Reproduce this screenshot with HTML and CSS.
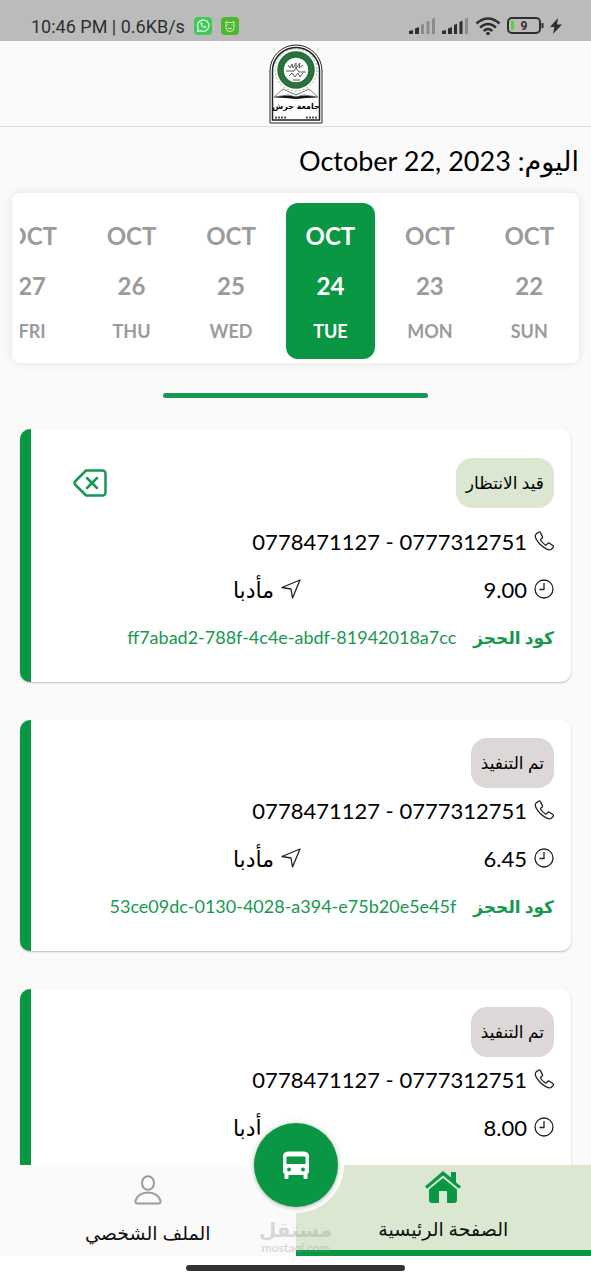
FILE: index.html
```
<!DOCTYPE html>
<html lang="ar" dir="rtl">
<head>
  <meta charset="UTF-8">
  <meta name="viewport" content="width=device-width, initial-scale=1">
  <title>الصفحة الرئيسية</title>
  <link rel="stylesheet" href="styles.css">
</head>
<body>
  <!-- icons used by every card -->
  <svg width="0" height="0" class="sprite">
    <symbol id="icon-phone" viewBox="0 0 20 20">
      <path d="M4.600 1.200 2.200 2.900C.6 4.400 1.600 8.300 5.800 13c4.300 4.500 9.200 6.700 11.300 5.500l2-2c.6-.7.400-1.500-.300-2l-3.300-2.200c-.700-.400-1.400-.300-1.900.300l-.900 1.100c-.400.500-.900.500-1.400.200-1.900-1.200-3.400-2.800-4.500-4.400-.400-.600-.300-1 .200-1.400l1-.8c.700-.500.700-1.200.300-1.900L6.400 1.600C5.900.900 5.200.800 4.600 1.200z"/>
    </symbol>
    <symbol id="icon-clock" viewBox="0 0 20 20">
      <circle cx="10" cy="10" r="9"/>
      <path d="M10 4v6.500H5.500"/>
    </symbol>
    <symbol id="icon-send" viewBox="0 0 20 20">
      <path d="M1 8.500 19 1l-7.500 18-1.500-9z"/>
    </symbol>
  </svg>

  <div class="status-bar" dir="ltr">
    <div class="status-left">
      <span>10:46 PM | 0.6KB/s</span>
      <svg class="app-icon" width="18" height="18" viewBox="0 0 18 18">
        <rect width="18" height="18" rx="4" fill="#3fc95c"/>
        <path d="M3.500 14.500l.8-2.900a5.700 5.700 0 1 1 2.200 2.100z" fill="none" stroke="#e6ffe9" stroke-width="1.200"/>
        <path d="M6.600 5.800c-1 1.600 2.600 5.800 5 5.200l.7-1.200-1.600-.9-.8.7c-.9-.4-1.500-1.100-1.900-1.900l.6-.7-.7-1.500z" fill="#e6ffe9"/>
      </svg>
      <svg class="app-icon" width="18" height="18" viewBox="0 0 18 18">
        <rect width="18" height="18" rx="4" fill="#4db835"/>
        <path d="M5 4.500l2 1h4l2-1v6a4 4 0 0 1-8 0z" fill="none" stroke="#d4f5b8"/>
        <path d="M7 7.500v1M11 7.500v1M7 11q2 1.500 4 0" fill="none" stroke="#d4f5b8"/>
      </svg>
    </div>
    <div class="status-right">
      <svg width="27" height="18" viewBox="0 0 27 18">
        <path d="M0 14l4-1v4H0zM6 11.500l4-1.500v7H6z" fill="#2f2f2f"/>
        <path d="M12 8l3-1.500V17h-3zM17.500 5l3-1.500V17h-3zM23 2l3-1.500V17h-3z" fill="#8b8b8b"/>
      </svg>
      <svg width="27" height="18" viewBox="0 0 27 18">
        <path d="M0 14l4-1v4H0zM6 11.500l4-1.500v7H6zM12 8l3-1.500V17h-3zM17.500 5l3-1.500V17h-3z" fill="#2f2f2f"/>
        <path d="M23 2l3-1.500V17h-3z" fill="#8b8b8b"/>
      </svg>
      <svg width="26" height="19" viewBox="0 0 26 19" fill="none" stroke="#2f2f2f" stroke-width="2.500">
        <path d="M1.500 6.500Q13-3.500 24.500 6.500M5 10.500q8-7 16 0M8.700 14q4.300-4 8.600 0"/>
        <circle cx="13" cy="16.500" r="1.800" fill="#2f2f2f" stroke="none"/>
      </svg>
      <svg width="37" height="18" viewBox="0 0 37 18">
        <rect x="1" y="1" width="32" height="15" rx="4" fill="none" stroke="#2f2f2f" stroke-width="2"/>
        <rect x="4" y="4" width="3" height="9" rx="1" fill="#5fce3c"/>
        <path d="M35.500 6v5" stroke="#2f2f2f" stroke-width="2"/>
        <text x="17" y="13" class="battery-text">9</text>
      </svg>
      <svg width="12" height="16" viewBox="0 0 12 16">
        <path d="M8 0 0 9h4.500L3 16l9-9.500H7z" fill="#2f2f2f"/>
      </svg>
    </div>
  </div>

  <header class="header">
    <svg class="logo" width="54" height="80" viewBox="0 0 54 80">
      <path d="M1 79V27a26 26 0 0 1 52 0v52z" fill="#fff" stroke="#222"/>
      <path d="M3.500 76V27a23.500 23.500 0 0 1 47 0v49z" fill="none" stroke="#222" stroke-width="1.500"/>
      <circle cx="27" cy="26" r="21" fill="none" stroke="#8fae93" stroke-dasharray="2 2"/>
      <circle cx="27" cy="26" r="15.500" fill="#fff" stroke="#23703c" stroke-width="6.500"/>
      <circle cx="27" cy="26" r="15.500" fill="none" stroke="#5b7247" stroke-width="2" stroke-dasharray="1 2"/>
      <path d="M19 21l2 3 2-4 1 4 3-5v5l4-5-1 5 4-3M17 27h8l2-3 3 4h7M20 32l3-3 3 4 3-4 2 4 3-4M24 36h7" fill="none" stroke="#555"/>
      <path d="M5 53l9-8 13 6 13-6 9 8-14-2-8 2-8-2z" fill="#fff" stroke="#777"/>
      <path d="M5 53.500q12-3 22-.5 10-2.500 22 .5l-12 .5-10 1-10-1z" fill="#111"/>
      <text x="27" y="65" class="logo-name">جامعة جرش</text>
      <path d="M6 73.500h11M37 73.500h11" stroke="#555" stroke-width="2" stroke-dasharray="2 1"/>
    </svg>
  </header>

  <main class="content">
    <h1 class="today">اليوم: <span dir="ltr">October 22, 2023</span></h1>

    <div class="calendar">
      <div class="calendar-days">
        <button class="day"><span>OCT</span><span>22</span><small>SUN</small></button>
        <button class="day"><span>OCT</span><span>23</span><small>MON</small></button>
        <button class="day active"><span>OCT</span><span>24</span><small>TUE</small></button>
        <button class="day"><span>OCT</span><span>25</span><small>WED</small></button>
        <button class="day"><span>OCT</span><span>26</span><small>THU</small></button>
        <button class="day"><span>OCT</span><span>27</span><small>FRI</small></button>
      </div>
    </div>

    <hr class="divider">

    <article class="card pending">
      <div class="card-top">
        <span class="badge">قيد الانتظار</span>
        <button class="btn-delete" aria-label="حذف">
          <svg width="34" height="28" viewBox="0 0 34 28">
            <path d="M13 1.500h16.500a3 3 0 0 1 3 3v19a3 3 0 0 1-3 3H13L2.500 16q-2-2 0-4z"/>
            <path d="M14 9l10 10M24 9L14 19"/>
          </svg>
        </button>
      </div>
      <div class="row">
        <svg class="icon"><use href="#icon-phone"/></svg>
        <span dir="ltr">0778471127 - 0777312751</span>
      </div>
      <div class="row-split">
        <div class="row"><svg class="icon"><use href="#icon-clock"/></svg><span>9.00</span></div>
        <div class="row"><svg class="icon"><use href="#icon-send"/></svg><span>مأدبا</span></div>
      </div>
      <div class="row code">
        <strong>كود الحجز</strong>
        <span dir="ltr">ff7abad2-788f-4c4e-abdf-81942018a7cc</span>
      </div>
    </article>

    <article class="card">
      <div class="card-top">
        <span class="badge">تم التنفيذ</span>
      </div>
      <div class="row">
        <svg class="icon"><use href="#icon-phone"/></svg>
        <span dir="ltr">0778471127 - 0777312751</span>
      </div>
      <div class="row-split">
        <div class="row"><svg class="icon"><use href="#icon-clock"/></svg><span>6.45</span></div>
        <div class="row"><svg class="icon"><use href="#icon-send"/></svg><span>مأدبا</span></div>
      </div>
      <div class="row code">
        <strong>كود الحجز</strong>
        <span dir="ltr">53ce09dc-0130-4028-a394-e75b20e5e45f</span>
      </div>
    </article>

    <article class="card">
      <div class="card-top">
        <span class="badge">تم التنفيذ</span>
      </div>
      <div class="row">
        <svg class="icon"><use href="#icon-phone"/></svg>
        <span dir="ltr">0778471127 - 0777312751</span>
      </div>
      <div class="row-split">
        <div class="row"><svg class="icon"><use href="#icon-clock"/></svg><span>8.00</span></div>
        <div class="row"><svg class="icon"><use href="#icon-send"/></svg><span>مأدبا</span></div>
      </div>
    </article>
  </main>

  <nav class="bottom-nav">
    <a href="#" class="nav-item active">
      <svg width="36" height="34" viewBox="0 0 36 34" fill="#0a9744">
        <path d="M18 0 0 15.500l2 2.300L18 4.500l16 13.300 2-2.300-5-4.300V1h-5v5.500z"/>
        <path d="M18 7 4 18.500V29q0 3 3 3h7V20h8v12h7q3 0 3-3V18.500z"/>
      </svg>
      <span>الصفحة الرئيسية</span>
    </a>
    <a href="#" class="nav-item">
      <svg width="28" height="30" viewBox="0 0 28 30" fill="none" stroke="#9b9b9b" stroke-width="2">
        <ellipse cx="14" cy="8" rx="6" ry="6.800"/>
        <path d="M1.500 26c1-5 6-8.500 12.500-8.500S25.500 21 26.500 26q.3 2.500-2 2.500h-21q-2.300 0-2-2.500z"/>
      </svg>
      <span>الملف الشخصي</span>
    </a>
    <button class="btn-bus" aria-label="حجز">
      <svg width="28" height="28" viewBox="0 0 28 28">
        <path d="M1 5q0-4 5-4.500h16q5 .5 5 4.500v15.500q0 1.500-1.500 2.500V27q0 1-1 1h-2q-1 0-1-1v-3h-15v3q0 1-1 1h-2q-1 0-1-1v-4Q1 22 1 20.500z" fill="#fff"/>
        <path d="M4.500 5.500h19V13h-19z" fill="#0a9744"/>
        <circle cx="7" cy="18.500" r="2" fill="#0a9744"/>
        <circle cx="21" cy="18.500" r="2" fill="#0a9744"/>
      </svg>
    </button>
    <div class="watermark">
      <b>مستقل</b>
      <span>mostaql.com</span>
    </div>
  </nav>

  <div class="home-bar"></div>
</body>
</html>
```
FILE: styles.css
```
* {
  box-sizing: border-box;
}

body {
  margin: 0;
  height: 100vh;
  display: flex;
  flex-direction: column;
  background-color: #fafafa;
  color: #000;
  font-family: Lato, "DejaVu Sans", sans-serif;
}

button {
  border: none;
  padding: 0;
  background: none;
  font-family: inherit;
  cursor: pointer;
}

svg {
  flex-shrink: 0;
}

.sprite {
  position: absolute;
}

/* status bar */
.status-bar {
  display: flex;
  justify-content: space-between;
  align-items: center;
  height: 41px;
  padding: 11px 29px 0 31px;
  background-color: #bbb;
  color: #2f2f2f;
  font-family: Roboto, sans-serif;
  font-size: 18px;
}

.status-left,
.status-right {
  display: flex;
  align-items: center;
}

.status-left {
  gap: 9px;
}

.status-right {
  gap: 6px;
}

.battery-text {
  font-size: 12px;
  font-weight: bold;
  text-anchor: middle;
  fill: #2f2f2f;
}

/* header */
.header {
  display: flex;
  justify-content: center;
  align-items: center;
  height: 86px;
  border-bottom: 1px solid #e0e0e0;
}

.logo-name {
  font-family: "DejaVu Sans", sans-serif;
  font-size: 8px;
  font-weight: bold;
  text-anchor: middle;
}

/* content */
.content {
  flex: 1;
  min-height: 0;
  overflow: hidden;
}

.today {
  margin: 16px 12px 14px;
  font-size: 27px;
  font-weight: normal;
  line-height: 36px;
}

.calendar {
  margin: 0 12px;
  padding: 10px 0 4px 8px;
  background-color: #fff;
  border-radius: 8px;
  box-shadow: 0 0 10px rgba(0, 0, 0, 0.1);
}

.calendar-days {
  display: flex;
  overflow: hidden;
}

.day {
  flex: 0 0 16%;
  display: flex;
  flex-direction: column;
  align-items: center;
  margin: 0 5px;
  padding: 18px 0;
  border-radius: 12px;
  color: #9b9b9b;
  font-size: 24px;
  font-weight: bold;
  line-height: 30px;
}

.day span {
  margin-bottom: 20px;
}

.day small {
  font-size: 18px;
  line-height: 20px;
}

.day.active {
  background-color: #0a9744;
  color: #fff;
}

.divider {
  width: 45%;
  height: 5px;
  margin: 30px auto 31px;
  border: none;
  border-radius: 3px;
  background-color: #189750;
}

/* booking cards */
.card {
  min-height: 231px;
  margin: 0 20px 38px;
  padding: 18px 17px 25px;
  background-color: #fff;
  border-left: 11px solid #0a9744;
  border-radius: 10px;
  box-shadow: 0 1px 2px rgba(0, 0, 0, 0.25);
}

.card-top {
  display: flex;
  justify-content: space-between;
  align-items: center;
  margin-bottom: 2px;
}

.card.pending {
  padding-top: 29px;
}

.pending .card-top {
  margin-bottom: 13px;
}

.badge {
  padding: 0 10px;
  border-radius: 16px;
  background-color: #ddd7d7;
  font-size: 17px;
  line-height: 50px;
}

.pending .badge {
  background-color: #dbe7d1;
}

.btn-delete {
  display: flex;
  padding: 0 25px;
}

.btn-delete path {
  fill: none;
  stroke: #189750;
  stroke-width: 2.5;
  stroke-linecap: round;
}

.row {
  display: flex;
  align-items: center;
  gap: 7px;
  height: 40px;
  margin-bottom: 8px;
  font-size: 22px;
}

.row-split {
  display: grid;
  grid-template-columns: 1fr 1fr;
}

.icon {
  width: 20px;
  height: 20px;
  fill: none;
  stroke: #222;
  stroke-width: 1.3;
  stroke-linejoin: round;
}

.code {
  gap: 17px;
  margin-bottom: 0;
  color: #189750;
  font-size: 18px;
}

.code strong {
  font-size: 17px;
}

/* bottom navigation */
.bottom-nav {
  position: relative;
  display: flex;
  height: 91px;
  background-color: #fafafa;
}

.nav-item {
  flex: 1;
  display: flex;
  flex-direction: column;
  align-items: center;
  justify-content: space-between;
  padding: 10px 0 8px;
  color: #111;
  font-size: 19px;
  line-height: 30px;
  text-decoration: none;
}

.nav-item.active {
  padding: 6px 0;
  background-color: #dbe7d1;
  border-bottom: 6px solid #0a9744;
}

.btn-bus {
  position: absolute;
  top: -42px;
  left: calc(50% - 42px);
  display: flex;
  align-items: center;
  justify-content: center;
  width: 84px;
  height: 84px;
  border-radius: 50%;
  background-color: #0a9744;
  box-shadow: 0 1px 4px rgba(0, 0, 0, 0.3), 0 0 0 6px #fcfcfc;
}

.watermark {
  position: absolute;
  left: 50%;
  bottom: 2px;
  transform: translateX(-50%);
  display: flex;
  flex-direction: column;
  align-items: center;
  color: rgba(150, 150, 150, 0.35);
  font-size: 12px;
  font-weight: bold;
  line-height: 12px;
}

.watermark b {
  font-size: 20px;
  line-height: 26px;
}

.home-bar {
  height: 24px;
  padding-top: 9px;
  background-color: #fff;
}

.home-bar::before {
  content: "";
  display: block;
  width: 37%;
  height: 6px;
  margin: 0 auto;
  border-radius: 3px;
  background-color: #333;
}
```
